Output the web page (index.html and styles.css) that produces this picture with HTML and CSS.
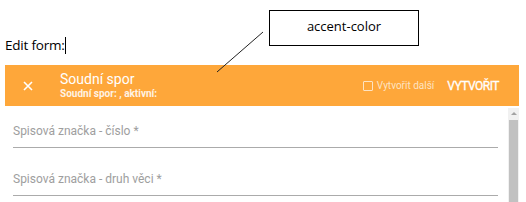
FILE: index.html
```html
<!DOCTYPE html>
<html lang="cs">
<head>
  <meta charset="UTF-8">
  <title>Edit form</title>
  <link rel="stylesheet" href="styles.css">
</head>
<body>

  <div class="caption">Edit form:<span class="caret"></span></div>

  <div class="note">accent-color</div>
  <svg class="pointer" width="60" height="50" viewBox="0 0 60 50">
    <line x1="50" y1="2" x2="4" y2="42" stroke="#222" stroke-width="1"/>
  </svg>

  <div class="dialog">
    <div class="toolbar">
      <svg class="close" width="10" height="10" viewBox="0 0 10 10">
        <path d="M1 1 L9 9 M9 1 L1 9" stroke="#fff" stroke-width="1.6"/>
      </svg>
      <div class="titles">
        <div class="title">Soudní spor</div>
        <div class="subtitle">Soudní spor: , aktivní:</div>
      </div>
      <label class="more"><span class="box"></span>Vytvořit další</label>
      <span class="create">VYTVOŘIT</span>
    </div>

    <div class="content">
      <div class="fields">
        <div class="field">
          <div class="label">Spisová značka - číslo *</div>
        </div>
        <div class="field">
          <div class="label">Spisová značka - druh věci *</div>
        </div>
      </div>
      <div class="scrollbar">
        <div class="arrow"></div>
        <div class="thumb"></div>
      </div>
    </div>
  </div>

</body>
</html>
```

FILE: styles.css
```css
body {
  margin: 0;
  background: #fff;
  font-family: 'Open Sans', sans-serif;
  color: #000;
}

.caption {
  padding: 36px 0 0 5px;
  height: 29px;
  font-size: 13.5px;
  line-height: 18px;
  letter-spacing: -0.2px;
}

.caret {
  display: inline-block;
  width: 1px;
  height: 17px;
  background: #000;
  vertical-align: -4px;
}

/* callout over the page */
.note {
  position: absolute;
  left: 269px;
  top: 10px;
  width: 148px;
  height: 34px;
  border: 1px solid #000;
  font-size: 13px;
  line-height: 30px;
  text-align: center;
}

.pointer {
  position: absolute;
  left: 213px;
  top: 30px;
}

.dialog {
  margin-left: 5px;
  width: 514px;
  font-family: Roboto, sans-serif;
}

.toolbar {
  display: flex;
  align-items: center;
  height: 41px;
  background: #fea73a;
  color: #fff;
}

.close {
  margin: 0 0 0 18px;
}

.titles {
  flex: 1;
  margin-left: 27px;
}

.title {
  font-size: 14px;
  line-height: 17px;
}

.subtitle {
  font-size: 10px;
  font-weight: bold;
  line-height: 12px;
  color: #fff3e4;
}

.more {
  display: flex;
  align-items: center;
  font-size: 10px;
  color: #fde3c2;
}

.box {
  width: 8px;
  height: 8px;
  border: 1px solid #fde3c2;
  border-radius: 1px;
  margin-right: 4px;
}

.create {
  margin: 0 20px 0 13px;
  font-size: 12px;
  letter-spacing: -0.5px;
  -webkit-text-stroke: 0.3px #fff;
}

.content {
  display: flex;
  height: 96px;
  overflow: hidden;
}

.fields {
  flex: 1;
  padding: 18px 10px 0 8px;
}

.field {
  padding-bottom: 24px;
}

.label {
  font-size: 12px;
  line-height: 14px;
  color: #9e9e9e;
  padding-bottom: 9px;
  border-bottom: 1px solid #ababab;
}

.scrollbar {
  width: 11px;
  margin-top: 2px;
  background: #f1f1f1;
  display: flex;
  flex-direction: column;
  align-items: center;
}

.arrow {
  width: 0;
  height: 0;
  margin: 4px 0 5px;
  border-left: 3px solid transparent;
  border-right: 3px solid transparent;
  border-bottom: 3px solid #a3a3a3;
}

.thumb {
  width: 9px;
  flex: 1;
  background: #c1c1c1;
}
```
